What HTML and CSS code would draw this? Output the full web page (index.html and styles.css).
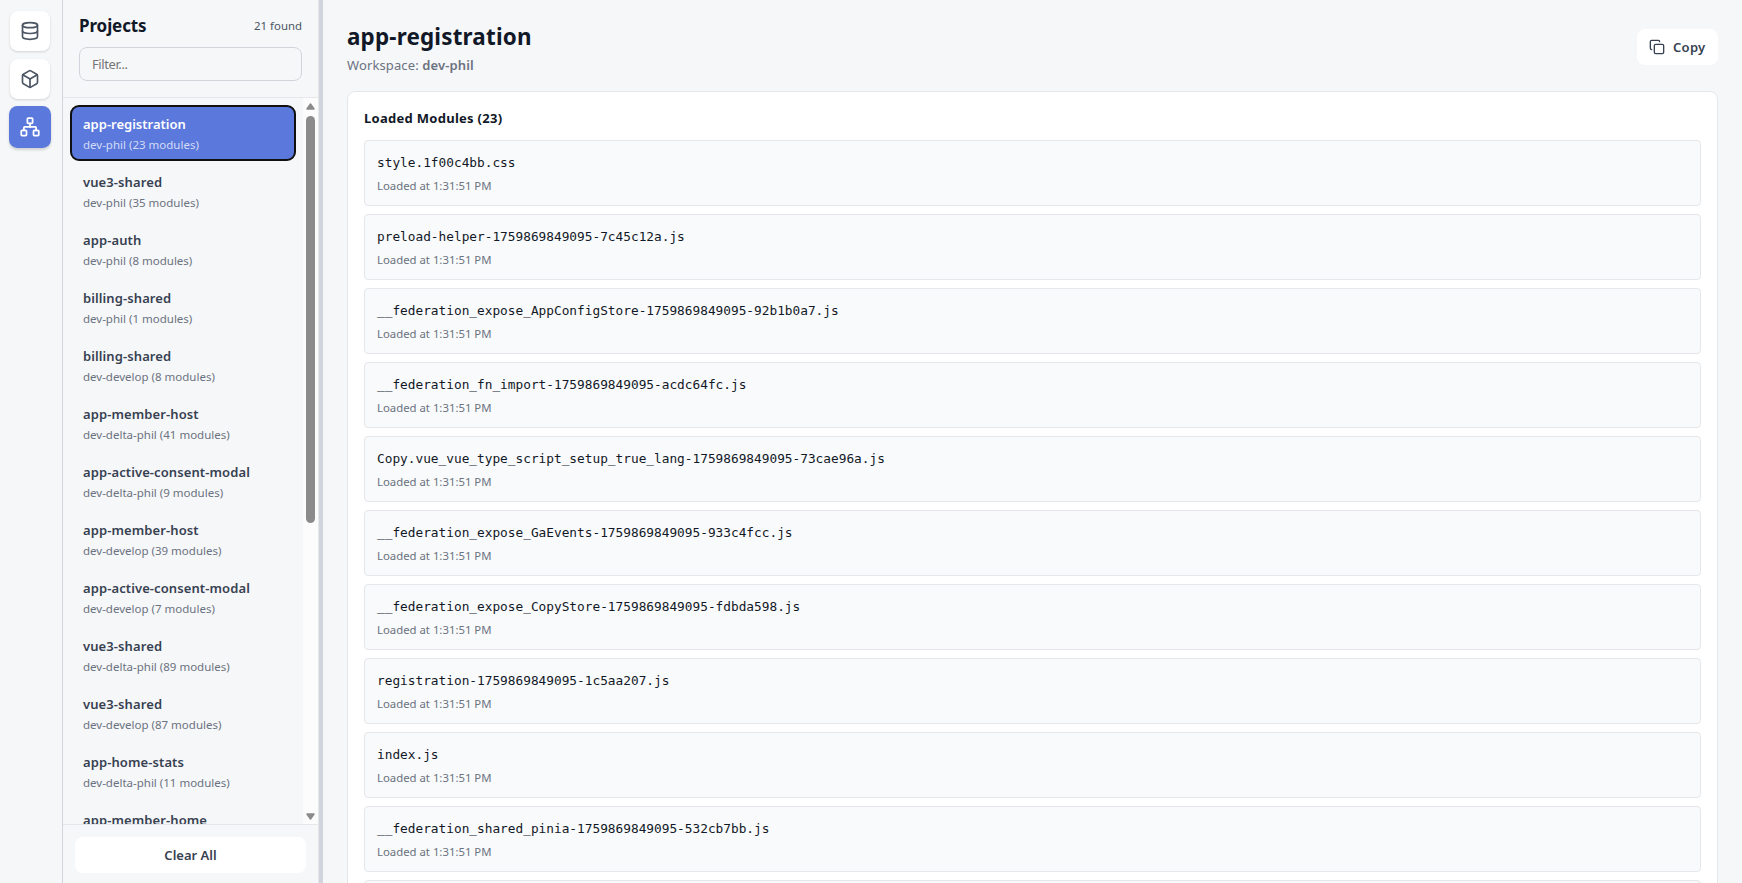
FILE: index.html
```html
<!DOCTYPE html>
<html lang="en">
<head>
<meta charset="utf-8">
<title>Projects</title>
<link rel="stylesheet" href="styles.css">
</head>
<body>
<div class="app">
  <nav class="rail">
    <button class="rail-btn" aria-label="Storage"><svg class="icon" viewBox="0 0 24 24"><ellipse cx="12" cy="5" rx="9" ry="3"/><path d="M3 5v14a9 3 0 0 0 18 0V5"/><path d="M3 12a9 3 0 0 0 18 0"/></svg></button>
    <button class="rail-btn" aria-label="Packages"><svg class="icon" viewBox="0 0 24 24"><path d="M21 8a2 2 0 0 0-1-1.73l-7-4a2 2 0 0 0-2 0l-7 4A2 2 0 0 0 3 8v8a2 2 0 0 0 1 1.73l7 4a2 2 0 0 0 2 0l7-4A2 2 0 0 0 21 16Z"/><path d="m3.3 7 8.7 5 8.7-5"/><path d="M12 22V12"/></svg></button>
    <button class="rail-btn active" aria-label="Modules"><svg class="icon" viewBox="0 0 24 24"><rect x="16" y="16" width="6" height="6" rx="1"/><rect x="2" y="16" width="6" height="6" rx="1"/><rect x="9" y="2" width="6" height="6" rx="1"/><path d="M5 16v-3a1 1 0 0 1 1-1h12a1 1 0 0 1 1 1v3"/><path d="M12 12V8"/></svg></button>
  </nav>
  <aside class="sidebar">
    <header class="side-head">
      <div class="side-title-row"><h2 class="side-title">Projects</h2><span class="found">21 found</span></div>
      <input class="filter" type="text" placeholder="Filter...">
    </header>
    <div class="list-wrap">
      <div class="list">
        <div class="item selected"><div class="name">app-registration</div><div class="meta">dev-phil (23 modules)</div></div>
        <div class="item"><div class="name">vue3-shared</div><div class="meta">dev-phil (35 modules)</div></div>
        <div class="item"><div class="name">app-auth</div><div class="meta">dev-phil (8 modules)</div></div>
        <div class="item"><div class="name">billing-shared</div><div class="meta">dev-phil (1 modules)</div></div>
        <div class="item"><div class="name">billing-shared</div><div class="meta">dev-develop (8 modules)</div></div>
        <div class="item"><div class="name">app-member-host</div><div class="meta">dev-delta-phil (41 modules)</div></div>
        <div class="item"><div class="name">app-active-consent-modal</div><div class="meta">dev-delta-phil (9 modules)</div></div>
        <div class="item"><div class="name">app-member-host</div><div class="meta">dev-develop (39 modules)</div></div>
        <div class="item"><div class="name">app-active-consent-modal</div><div class="meta">dev-develop (7 modules)</div></div>
        <div class="item"><div class="name">vue3-shared</div><div class="meta">dev-delta-phil (89 modules)</div></div>
        <div class="item"><div class="name">vue3-shared</div><div class="meta">dev-develop (87 modules)</div></div>
        <div class="item"><div class="name">app-home-stats</div><div class="meta">dev-delta-phil (11 modules)</div></div>
        <div class="item"><div class="name">app-member-home</div></div>
      </div>
      <div class="scrollbar">
        <svg class="arrow" viewBox="0 0 9 7"><path d="M4.5 1 8 6H1Z"/></svg>
        <div class="track"><div class="thumb"></div></div>
        <svg class="arrow" viewBox="0 0 9 7"><path d="M4.5 6 8 1H1Z"/></svg>
      </div>
    </div>
    <footer class="side-foot"><button class="clear">Clear All</button></footer>
  </aside>
  <div class="splitter"></div>
  <main class="main">
    <header class="main-head">
      <div>
        <h1 class="title">app-registration</h1>
        <p class="workspace">Workspace: <strong class="ws-name">dev-phil</strong></p>
      </div>
      <button class="copy"><svg class="icon copy-icon" viewBox="0 0 24 24"><rect x="8" y="8" width="14" height="14" rx="2"/><path d="M4 16c-1.1 0-2-.9-2-2V4c0-1.1.9-2 2-2h10c1.1 0 2 .9 2 2"/></svg><span>Copy</span></button>
    </header>
    <section class="card">
      <h3 class="card-title">Loaded Modules (23)</h3>
      <div class="modules">
        <div class="module"><div class="file">style.1f00c4bb.css</div><div class="loaded">Loaded at 1:31:51 PM</div></div>
        <div class="module"><div class="file">preload-helper-1759869849095-7c45c12a.js</div><div class="loaded">Loaded at 1:31:51 PM</div></div>
        <div class="module"><div class="file">__federation_expose_AppConfigStore-1759869849095-92b1b0a7.js</div><div class="loaded">Loaded at 1:31:51 PM</div></div>
        <div class="module"><div class="file">__federation_fn_import-1759869849095-acdc64fc.js</div><div class="loaded">Loaded at 1:31:51 PM</div></div>
        <div class="module"><div class="file">Copy.vue_vue_type_script_setup_true_lang-1759869849095-73cae96a.js</div><div class="loaded">Loaded at 1:31:51 PM</div></div>
        <div class="module"><div class="file">__federation_expose_GaEvents-1759869849095-933c4fcc.js</div><div class="loaded">Loaded at 1:31:51 PM</div></div>
        <div class="module"><div class="file">__federation_expose_CopyStore-1759869849095-fdbda598.js</div><div class="loaded">Loaded at 1:31:51 PM</div></div>
        <div class="module"><div class="file">registration-1759869849095-1c5aa207.js</div><div class="loaded">Loaded at 1:31:51 PM</div></div>
        <div class="module"><div class="file">index.js</div><div class="loaded">Loaded at 1:31:51 PM</div></div>
        <div class="module"><div class="file">__federation_shared_pinia-1759869849095-532cb7bb.js</div><div class="loaded">Loaded at 1:31:51 PM</div></div>
        <div class="module"></div>
      </div>
    </section>
  </main>
</div>
</body>
</html>
```
FILE: styles.css
```css
* { box-sizing: border-box; }
body {
  margin: 0;
  background: #f6f7f9;
  color: #111827;
  font-family: "Noto Sans", "Open Sans", sans-serif;
  font-size: 13px;
  line-height: 20px;
}
h1, h2, h3, p { margin: 0; }
button { font: inherit; border: 0; padding: 0; }
.app { display: flex; height: 883px; overflow: hidden; }
.icon {
  width: 20px;
  height: 20px;
  fill: none;
  stroke: currentColor;
  stroke-width: 2;
  stroke-linecap: round;
  stroke-linejoin: round;
}

.rail {
  flex: none;
  width: 63px;
  padding: 11px 0 0 10px;
  display: flex;
  flex-direction: column;
  gap: 8px;
  border-right: 1px solid #d1d5db;
}
.rail-btn {
  width: 40px;
  height: 40px;
  display: flex;
  align-items: center;
  justify-content: center;
  border-radius: 8px;
  background: #fff;
  color: #4b5563;
  box-shadow: 0 1px 3px rgba(0, 0, 0, .1), 0 1px 2px rgba(0, 0, 0, .06);
}
.rail-btn.active { background: #5b78dc; color: #fff; transform: scale(1.05); }

.sidebar {
  flex: none;
  width: 256px;
  display: flex;
  flex-direction: column;
  border-right: 1px solid #e5e7eb;
}
.side-head {
  flex: none;
  height: 98px;
  padding: 12px 16px 0;
  border-bottom: 1px solid #e5e7eb;
}
.side-title-row { display: flex; justify-content: space-between; align-items: center; height: 28px; }
.side-title { font-size: 17px; line-height: 28px; font-weight: 700; letter-spacing: -.1px; }
.found { font-size: 11.4px; line-height: 16px; color: #4b5563; }
.filter {
  display: block;
  width: 223px;
  height: 34px;
  margin-top: 7px;
  padding: 0 12px;
  font: inherit;
  letter-spacing: -.4px;
  background: transparent;
  border: 1px solid #d1d5db;
  border-radius: 8px;
}
.filter::placeholder { color: #757575; }
.list-wrap { flex: 1; min-height: 0; display: flex; overflow: hidden; }
.list { flex: 1; padding: 8px; }
.item { height: 54px; margin-bottom: 4px; padding: 8px 12px; border-radius: 6px; }
.name { font-weight: 600; color: #374151; white-space: nowrap; letter-spacing: .1px; }
.meta { margin-top: 3px; font-size: 11.5px; line-height: 16px; color: #6b7280; white-space: nowrap; }
.selected { background: #5b78dc; outline: 2px solid #101010; outline-offset: -1px; border-radius: 8px; }
.selected .name { color: #fff; letter-spacing: 0; }
.selected .meta { color: #d3dcf7; }
.scrollbar {
  flex: none;
  width: 15px;
  padding: 5px 0 4px;
  display: flex;
  flex-direction: column;
  align-items: center;
  background: #fcfcfc;
}
.arrow { flex: none; width: 9px; height: 7px; fill: #8b8b8b; stroke: #8b8b8b; stroke-width: 1.5; stroke-linejoin: round; }
.track { flex: 1; padding-top: 6px; }
.thumb { width: 9px; height: 407px; border-radius: 5px; background: #8b8b8b; }
.side-foot { flex: none; height: 59px; padding: 12px; border-top: 1px solid #e5e7eb; }
.clear {
  display: block;
  width: 100%;
  height: 36px;
  border-radius: 8px;
  background: #fff;
  color: #374151;
  font-weight: 600;
}
.splitter { flex: none; width: 4px; background: #d1d5db; }

.main { flex: 1; padding: 21px 24px 0; overflow: hidden; }
.main-head { display: flex; justify-content: space-between; align-items: flex-start; height: 70px; }
.title { font-size: 22.4px; line-height: 32px; font-weight: 700; letter-spacing: .2px; }
.workspace { margin-top: 2px; color: #6b7280; letter-spacing: .12px; }
.ws-name { font-weight: 600; }
.copy {
  display: flex;
  align-items: center;
  gap: 8px;
  width: 81px;
  height: 36px;
  margin-top: 8px;
  padding: 0 12px;
  border-radius: 8px;
  background: #fff;
  color: #374151;
  font-weight: 600;
  letter-spacing: .3px;
}
.copy-icon { flex: none; width: 16px; height: 16px; }
.card { height: 900px; padding: 16px; background: #fff; border: 1px solid #e5e7eb; border-radius: 8px; }
.card-title { font-size: 13px; line-height: 20px; font-weight: 700; letter-spacing: .28px; }
.modules { display: flex; flex-direction: column; gap: 8px; margin-top: 12px; }
.module { height: 66px; padding: 12px; background: #f9fafb; border: 1px solid #e5e7eb; border-radius: 4px; }
.file { font-family: "DejaVu Sans Mono", monospace; font-size: 12.79px; line-height: 20px; }
.loaded { margin-top: 5px; font-size: 11.35px; line-height: 16px; color: #6b7280; }
```
